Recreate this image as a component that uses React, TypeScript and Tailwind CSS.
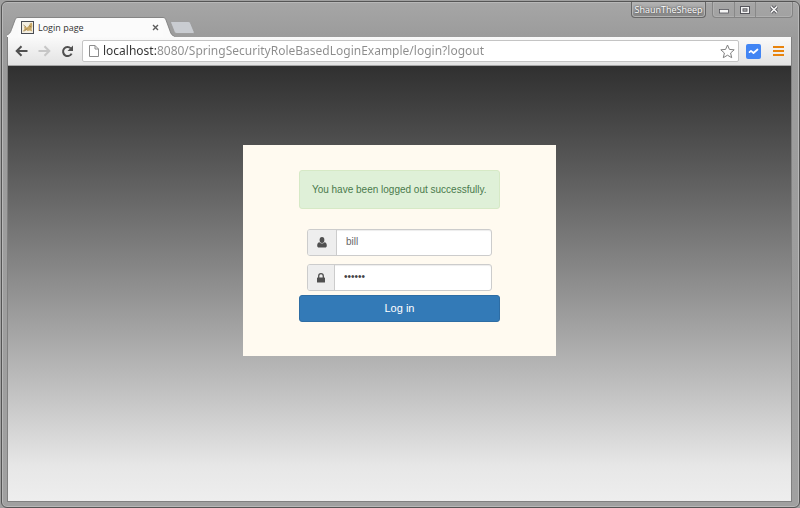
import type { ReactNode } from "react";

function Favicon() {
  return (
    <svg width="13" height="13" viewBox="0 0 13 13" aria-hidden="true">
      <rect x="0.5" y="0.5" width="12" height="12" fill="#f4efe2" stroke="#4a4d55" />
      <path d="M1.500 10.500 3.500 8 3 5.500 6 6.500 8.500 4 8.800 2.500 11 1.800 11.300 5.500 10.500 8 11.300 10.500 8.800 9.500 6.500 10 5.500 9Z" fill="#c9a867" />
      <path d="M2.500 4 5 6M8 4.500 10 6M3 10.500 6 7.500" stroke="#8d7446" strokeWidth=".8" />
    </svg>
  );
}

function WindowButton({ label, className, children }: { label: string; className: string; children: ReactNode }) {
  return (
    <button type="button" aria-label={label} className={`flex h-full items-center justify-center ${className}`}>
      {children}
    </button>
  );
}

function TitleBar() {
  return (
    <div className="flex h-[35px] items-start justify-between">
      <div role="tablist" className="flex items-end self-end">
        <div role="tab" aria-selected="true" className="flex h-5">
          <svg width="11" height="20" viewBox="0 0 11 20" aria-hidden="true">
            <path d="M0 20V18C2.500 17 3.500 15.500 4.500 12.500L8 3C8.700 1.200 9.400.5 11 .5V20Z" fill="#fafafa" />
            <path d="M0 18C2.500 17 3.500 15.500 4.500 12.500L8 3C8.700 1.200 9.400.5 11 .5" fill="none" stroke="#777" strokeWidth=".8" />
          </svg>
          <div className="flex w-[145px] items-center gap-1 border-t border-[#858585] bg-[#fbfbfb] pr-[2px] pl-[3px]">
            <Favicon />
            <span className="flex-1 font-['Open_Sans','Noto_Sans',sans-serif] text-[9px] leading-3 text-[#333]">Login page</span>
            <button type="button" aria-label="Close tab" className="flex size-3 items-center justify-center">
              <svg width="7" height="7" viewBox="0 0 7 7" aria-hidden="true">
                <path d="m1 1 5 5M6 1 1 6" stroke="#5c5c5c" strokeWidth="1.400" />
              </svg>
            </button>
          </div>
          <svg width="11" height="20" viewBox="0 0 11 20" aria-hidden="true">
            <path d="M0 .5C1.600.5 2.300 1.200 3 3L7 14C8 17 9 18.500 11 19V20H0Z" fill="#fafafa" />
            <path d="M0 .5C1.600.5 2.300 1.200 3 3L7 14C8 17 9 18.500 11 19" fill="none" stroke="#777" strokeWidth=".8" />
          </svg>
        </div>
        <button type="button" aria-label="New tab" className="-ml-1 pb-[3px]">
          <svg width="26" height="13" viewBox="0 0 26 13" aria-hidden="true">
            <path d="M.8 2C.4 1 .7.5 1.800.5H18C19.500.5 20 1 20.500 2L24 10.500C24.500 12 24 12.500 23 12.500H7C5.500 12.500 4.800 12 4.200 10.500Z" fill="#c9ccd1" stroke="#999" strokeWidth=".8" />
          </svg>
        </button>
      </div>
      <div className="flex h-4 gap-[6px]">
        <button
          type="button"
          className="flex w-[75px] items-center justify-center rounded-b border border-t-0 border-[#666] bg-linear-to-b from-[#b5b5b5] via-[#a2a2a2] via-50% to-[#808080] font-['Open_Sans','Noto_Sans',sans-serif] text-[9px] leading-3 text-white shadow-[inset_0_0_0_1px_#b4b4b4] text-shadow-[0_0_2px_#222]"
        >
          ShaunTheSheep
        </button>
        <div className="flex w-[81px] overflow-hidden rounded-b border border-t-0 border-[#848484] shadow-[inset_0_0_0_1px_#b0b0b0]">
          <WindowButton label="Minimize" className="w-[22px] border-r border-[#888]">
            <svg width="10" height="8" viewBox="0 0 10 8" aria-hidden="true">
              <rect x=".5" y="3.500" width="9" height="3.500" fill="#f4f4f4" stroke="#56565c" strokeWidth=".8" />
            </svg>
          </WindowButton>
          <WindowButton label="Maximize" className="w-[21px] border-r border-[#888]">
            <svg width="10" height="8" viewBox="0 0 10 8" aria-hidden="true">
              <rect x=".5" y=".5" width="9" height="7" fill="#f4f4f4" stroke="#56565c" />
              <rect x="3" y="2.800" width="4" height="2.400" fill="#aaa" stroke="#56565c" strokeWidth=".9" />
            </svg>
          </WindowButton>
          <WindowButton label="Close" className="flex-1">
            <svg width="10" height="9" viewBox="0 0 10 9" aria-hidden="true">
              <path d="m2 1.500 6 6M8 1.500l-6 6" stroke="#56565c" strokeWidth="3.200" />
              <path d="m2 1.500 6 6M8 1.500l-6 6" stroke="#f5f5f5" strokeWidth="1.700" />
            </svg>
          </WindowButton>
        </div>
      </div>
    </div>
  );
}

function Toolbar() {
  return (
    <div className="flex h-[29px] items-center border-b border-[#a5a5a5] bg-linear-to-b from-[#fafafa] to-[#e3e3e3] pr-[7px] pl-[7px]">
      <div className="flex w-[67px] items-center gap-[10px]">
        <button type="button" aria-label="Back">
          <svg width="13" height="12" viewBox="0 0 13 12" fill="none" stroke="#505050" strokeWidth="2" aria-hidden="true">
            <path d="M12.500 6H2M6.500 1.200 1.700 6l4.800 4.800" />
          </svg>
        </button>
        <button type="button" aria-label="Forward">
          <svg width="13" height="12" viewBox="0 0 13 12" fill="none" stroke="#c6c6c6" strokeWidth="2" aria-hidden="true">
            <path d="M.5 6H11M6.500 1.200 11.300 6l-4.800 4.800" />
          </svg>
        </button>
        <button type="button" aria-label="Reload">
          <svg width="13" height="13" viewBox="0 0 13 13" aria-hidden="true">
            <path d="M9.800 3.400A4.500 4.500 0 1 0 10.600 8.600" fill="none" stroke="#505050" strokeWidth="2" />
            <path d="M12 .5V6H6.500Z" fill="#505050" />
          </svg>
        </button>
      </div>
      <div className="flex h-[22px] flex-1 items-center gap-1 rounded-xs border border-[#c4c4c4] bg-white pr-[3px] pl-[6px]">
        <svg width="10" height="12" viewBox="0 0 10 12" fill="#fff" stroke="#8c8c8c" aria-hidden="true">
          <path d="M.5.5h5.500L9.500 4v7.500h-9ZM6 .5V4h3.500" />
        </svg>
        <input
          aria-label="Address"
          defaultValue="localhost:8080/SpringSecurityRoleBasedLoginExample/login?logout"
          className="min-w-0 flex-1 bg-linear-to-r from-[#333] from-[53px] to-[#8c8c8c] to-[53px] bg-clip-text font-['Noto_Sans','Open_Sans',sans-serif] text-[12px] leading-5 text-transparent outline-none"
        />
        <button type="button" aria-label="Bookmark this page">
          <svg width="15" height="15" viewBox="0 0 15 15" fill="#fff" stroke="#808080" strokeLinejoin="round" aria-hidden="true">
            <path d="m7.500 1 1.900 4.400 4.800.4-3.600 3.200 1.100 4.700-4.200-2.500-4.200 2.500 1.100-4.700L.8 5.800l4.800-.4Z" />
          </svg>
        </button>
      </div>
      <button type="button" aria-label="Extension" className="ml-[7px] flex size-[15px] items-center justify-center rounded-xs bg-[#4285f4]">
        <svg width="11" height="7" viewBox="0 0 11 7" fill="none" stroke="#fff" strokeWidth="1.700" strokeLinejoin="round" strokeLinecap="round" aria-hidden="true">
          <path d="M1.500 4.200 3 2.800 5.500 5 9.500 1.500" />
        </svg>
      </button>
      <button type="button" aria-label="Menu" className="ml-[12px] flex w-[11px] flex-col gap-[2px]">
        <span className="h-[2px] w-full bg-[#e8830c]" />
        <span className="h-[2px] w-full bg-[#e8830c]" />
        <span className="h-[2px] w-full bg-[#e8830c]" />
      </button>
    </div>
  );
}

function LoginForm() {
  return (
    <form className="w-2/5 min-w-[280px] bg-[#fffaf0] px-14 pt-[25px] pb-[34px]" onSubmit={(e) => e.preventDefault()}>
      <div role="status" className="rounded-[3px] border border-[#d6e9c6] bg-[#dff0d8] px-3 pt-3 pb-[11px] text-[10px] leading-[14px] whitespace-nowrap text-[#4a7a4c]">
        You have been logged out successfully.
      </div>
      <div className="mt-5 mb-1 flex flex-col gap-2 px-2">
        <div className="flex h-[27px] overflow-hidden rounded-[3px] border border-[#ccc] bg-white shadow-[inset_0_1px_1px_#00000013]">
          <label htmlFor="username" className="flex w-[29px] items-center justify-center border-r border-[#ccc] bg-[#eee]">
            <svg width="10" height="11" viewBox="0 0 10 11" fill="#505050" role="img" aria-label="Username">
              <ellipse cx="5" cy="3" rx="2.400" ry="2.900" />
              <path d="M2.500 5.300C3.900 6.900 6.100 6.900 7.500 5.300 9 5.500 9.800 6.800 9.800 8.700 9.800 9.900 9.200 10.500 8 10.500H2C.8 10.500.2 9.900.2 8.700.2 6.800 1 5.500 2.500 5.300Z" />
            </svg>
          </label>
          <input id="username" type="text" defaultValue="bill" className="min-w-0 flex-1 px-[9px] pb-[2px] text-[10px] text-[#666] outline-none" />
        </div>
        <div className="flex h-[27px] overflow-hidden rounded-[3px] border border-[#ccc] bg-white shadow-[inset_0_1px_1px_#00000013]">
          <label htmlFor="password" className="flex w-[27px] items-center justify-center border-r border-[#ccc] bg-[#eee]">
            <svg width="8" height="10" viewBox="0 0 8 10" role="img" aria-label="Password">
              <rect y="4.500" width="8" height="5" rx=".6" fill="#505050" />
              <path d="M1.700 5V3a2.300 2.300 0 0 1 4.600 0v2" fill="none" stroke="#505050" strokeWidth="1.300" />
            </svg>
          </label>
          <input id="password" type="password" defaultValue="secret" className="min-w-0 flex-1 px-[9px] pb-[2px] text-[10px] text-[#444] outline-none" />
        </div>
      </div>
      <button type="submit" className="flex h-[27px] w-full items-center justify-center rounded-[3px] border border-[#2e6da4] bg-[#337ab7] text-[11px] text-white">
        Log in
      </button>
    </form>
  );
}

export default function App() {
  return (
    <div className="flex min-h-screen flex-col bg-[#a0a0a0] pt-px pl-px font-['Liberation_Sans',Arial,sans-serif]">
      <div className="flex flex-1 flex-col rounded-md border border-[#555] bg-linear-to-b from-[#a6a6a6] via-[#9b9b9b] via-[36px] to-[#a0a0a0] pr-[6px] pb-[5px] pl-[5px] shadow-[inset_0_0_0_1px_#b8b8b8]">
        <TitleBar />
        <div className="mr-px flex flex-1 flex-col border border-t-0 border-[#808080]">
          <Toolbar />
          <main className="flex flex-1 items-start justify-center bg-linear-to-b from-[#303030] via-[#e7e7e7] via-92% to-[#eee] pt-[79px]">
            <LoginForm />
          </main>
        </div>
      </div>
    </div>
  );
}
